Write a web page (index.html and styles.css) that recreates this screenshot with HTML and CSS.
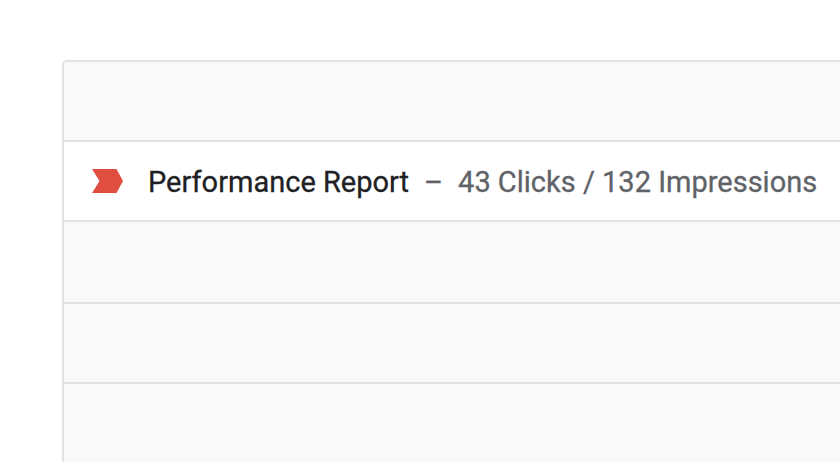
FILE: index.html
```html
<!DOCTYPE html>
<html>
<head>
<meta charset="utf-8">
<link rel="stylesheet" href="styles.css">
</head>
<body>
<div class="page">
  <div class="card">
    <div class="row row-head"></div>
    <div class="row row-active">
      <svg class="flag" width="32" height="24" viewBox="0 0 32 24"><polygon points="0,0 24.5,0 31,12 24.5,24 0,24 7.5,12" fill="#e04e41"/></svg>
      <span class="title">Performance Report</span>
      <span class="dash">–</span>
      <span class="stats">43 Clicks / 132 Impressions</span>
    </div>
    <div class="row row-tall"></div>
    <div class="row"></div>
    <div class="row"></div>
  </div>
</div>
</body>
</html>
```
FILE: styles.css
```css
html, body {
  margin: 0;
  padding: 0;
  background: #ffffff;
  overflow: hidden;
  width: 840px;
  height: 462px;
}
.page {
  padding: 60px 0 0 62px;
}
.card {
  width: 1000px;
  border: 2px solid #e2e2e2;
  border-radius: 5px;
  background: #f9f9f9;
  font-family: Roboto, "Noto Sans", sans-serif;
}
.row {
  height: 78px;
  border-top: 2px solid #e2e2e2;
  background: #f9f9f9;
}
.row-head {
  border-top: none;
  border-radius: 4px 4px 0 0;
}
.row-tall {
  height: 80px;
}
.row-active {
  background: #ffffff;
  display: flex;
  align-items: center;
  padding-left: 28px;
}
.flag {
  display: block;
  margin-right: 24px;
  flex-shrink: 0;
}
.title,
.dash,
.stats {
  font-size: 29px;
  font-weight: 400;
  white-space: nowrap;
  -webkit-text-stroke: 0.3px currentColor;
  position: relative;
  top: 1px;
}
.title {
  color: #202124;
}
.dash {
  color: #5f6368;
  margin: 0 15px;
}
.stats {
  color: #5f6368;
}
```
